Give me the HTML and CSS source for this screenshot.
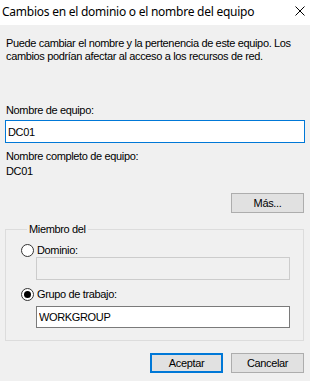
FILE: index.html
```html
<!DOCTYPE html>
<html lang="es">
<head>
    <meta charset="UTF-8">
    <meta name="viewport" content="width=device-width, initial-scale=1.0">
    <title>Cambios en el dominio o el nombre del equipo</title>
    <link rel="stylesheet" href="styles.css">
</head>
<body>
    <div class="titlebar">
        <span class="title">Cambios en el dominio o el nombre del equipo</span>
        <svg class="close" width="10" height="10" viewBox="0 0 10 10">
            <path d="M0.5 0.5 L9.5 9.5 M9.5 0.5 L0.5 9.5" stroke="#000" stroke-width="1" fill="none"/>
        </svg>
    </div>

    <div class="content">
        <p class="intro">Puede cambiar el nombre y la pertenencia de este equipo. Los cambios podrían afectar al acceso a los recursos de red.</p>

        <label class="label" for="computerName">Nombre de equipo:</label>
        <input class="textbox focused" id="computerName" type="text" value="DC01">

        <div class="label fullname-label">Nombre completo de equipo:</div>
        <div class="label fullname">DC01</div>

        <div class="row more-row">
            <button class="btn" type="button">Más...</button>
        </div>

        <fieldset class="group">
            <legend>Miembro del</legend>

            <div class="radio-row">
                <span class="radio"></span>
                <span>Dominio:</span>
            </div>
            <input class="textbox disabled" type="text" disabled>

            <div class="radio-row workgroup-row">
                <span class="radio checked"></span>
                <span>Grupo de trabajo:</span>
            </div>
            <input class="textbox workgroup" type="text" value="WORKGROUP">
        </fieldset>

        <div class="row buttons">
            <button class="btn default" type="button">Aceptar</button>
            <button class="btn" type="button">Cancelar</button>
        </div>
    </div>
</body>
</html>
```

FILE: styles.css
```css
body {
    margin: 0;
    width: 310px;
    height: 381px;
    background-color: #f0f0f0;
    font-family: 'Liberation Sans', Arial, sans-serif;
    font-size: 11px;
    letter-spacing: -0.35px;
    color: #000;
    overflow: hidden;
}

.titlebar {
    height: 25px;
    background-color: #fff;
    display: flex;
    align-items: center;
    justify-content: space-between;
    padding: 0 5px 0 2px;
}

.title {
    font-family: 'Noto Sans', sans-serif;
    font-size: 12px;
    letter-spacing: -0.25px;
    color: #000;
    margin-top: -2px;
}

.close {
    display: block;
    margin-top: -3px;
}

.content {
    display: flex;
    flex-direction: column;
    padding: 0 5px 0 5px;
}

.intro {
    margin: 12px 0 0 1px;
    line-height: 13px;
}

.label {
    display: block;
    line-height: 13px;
    margin-left: 1px;
}

label.label {
    margin-top: 41px;
}

.textbox {
    box-sizing: border-box;
    height: 23px;
    margin: 3px 0 0;
    padding: 0 0 0 2px;
    border: 1px solid #7a7a7a;
    background-color: #fff;
    font-family: 'Liberation Sans', Arial, sans-serif;
    font-size: 11px;
    letter-spacing: -0.35px;
    color: #000;
    outline: none;
}

.textbox.focused {
    border-color: #0078d7;
}

.textbox.disabled {
    border-color: #cccccc;
    background-color: #f0f0f0;
}

.fullname-label {
    margin-top: 7px;
}

.fullname {
    margin-top: 2px;
}

.row {
    display: flex;
    justify-content: flex-end;
    gap: 8px;
    padding-right: 1px;
}

.more-row {
    margin-top: 15px;
}

.btn {
    box-sizing: border-box;
    width: 73px;
    height: 20px;
    padding: 0;
    border: 1px solid #adadad;
    background-color: #e1e1e1;
    font-family: 'Liberation Sans', Arial, sans-serif;
    font-size: 11px;
    letter-spacing: -0.35px;
    color: #000;
}

.btn.default {
    border: 2px solid #0078d7;
}

.group {
    margin: 8px 1px 0 0;
    padding: 0 13px 12px 15px;
    border: 1px solid #dcdcdc;
    display: flex;
    flex-direction: column;
}

.group legend {
    padding: 0 2px;
    margin-left: 6px;
    line-height: 17px;
}

.group .textbox {
    margin: 0 0 0 15px;
}

.group .workgroup {
    height: 22px;
    margin-top: 5px;
}

.radio-row {
    display: flex;
    align-items: center;
    gap: 3px;
    height: 13px;
    margin-top: 6px;
    line-height: 13px;
}

.workgroup-row {
    margin-top: 8px;
}

.radio {
    box-sizing: border-box;
    width: 13px;
    height: 13px;
    border: 1px solid #333;
    border-radius: 50%;
    background-color: #fff;
    display: flex;
    align-items: center;
    justify-content: center;
}

.radio.checked::after {
    content: "";
    width: 7px;
    height: 7px;
    border-radius: 50%;
    background-color: #000;
}

.buttons {
    margin-top: 12px;
}
```
